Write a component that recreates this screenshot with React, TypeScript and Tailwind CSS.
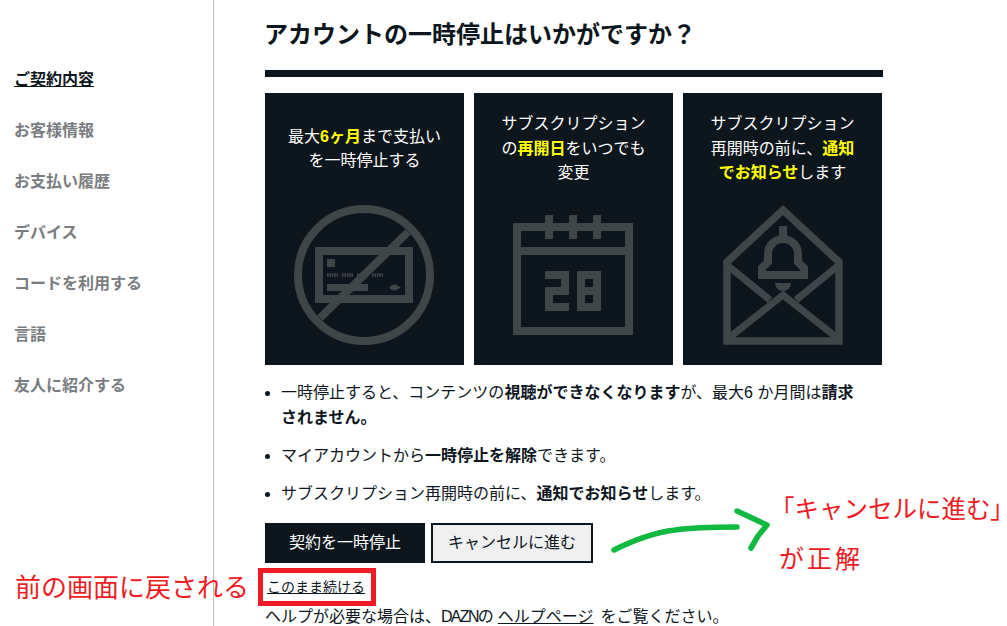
const font = { fontFamily: '"Liberation Sans", "Noto Sans CJK JP", sans-serif' };

const menu = ["ご契約内容", "お客様情報", "お支払い履歴", "デバイス", "コードを利用する", "言語", "友人に紹介する"];

function CardIcon() {
  return (
    <svg width="199" height="162" viewBox="0 0 199 162" fill="none" stroke="#3e4648" strokeWidth="8">
      <circle cx="99" cy="72" r="66" />
      <rect x="54" y="48" width="90" height="48" />
      <path d="M55 115 L143 29" />
      <rect x="62" y="56" width="8" height="8" fill="#3e4648" stroke="none" />
      <path d="M62 72 H73 M77 72 H88 M92 72 H103 M107 72 H118" strokeWidth="3.5" strokeDasharray="1.6 0.8" />
      <rect x="62" y="81" width="41" height="7" fill="#3e4648" stroke="none" />
      <path d="M124 84.5 L128 81 V88 Z M130 81 L136 84.5 L130 88 L127 84.5 Z" fill="#3e4648" stroke="none" />
    </svg>
  );
}

function CalendarIcon() {
  return (
    <svg width="199" height="162" viewBox="0 0 199 162" fill="none" stroke="#3e4648" strokeWidth="8">
      <rect x="43" y="24" width="112" height="104" />
      <path d="M43 48 H155" />
      <path d="M75 12 V36 M99 12 V36 M123 12 V36" />
      <path d="M71 72 H91 V88 H75 V104 H95" />
      <rect x="107" y="72" width="16" height="32" />
      <path d="M107 88 H123" />
    </svg>
  );
}

function EnvelopeIcon() {
  return (
    <svg width="199" height="162" viewBox="0 0 199 162" fill="none" stroke="#3e4648" strokeWidth="8">
      <path d="M44 138 V59 L100 7 L156 59 V138 Z" strokeWidth="7.5" />
      <path d="M44 62 L87 97 M156 62 L113 97" strokeWidth="7" />
      <path d="M47 134 L100 92 L153 134" strokeWidth="7" />
      <path d="M100 23 V34" />
      <path d="M79 72 H121 V65 L115 59 V51 A15 15 0 0 0 85 51 V59 L79 65 Z" />
      <path d="M92 80 H108 A8 8 0 0 1 92 80 Z" fill="#3e4648" stroke="none" />
    </svg>
  );
}

function Hl({ children }: { children: React.ReactNode }) {
  return <b className="font-bold text-[#ffff00]">{children}</b>;
}

export default function App() {
  return (
    <div className="relative flex h-[626px] w-[1007px] overflow-hidden bg-white text-[#0d161d]" style={font}>
      <nav className="h-full w-[214px] shrink-0 border-r border-[#bdbdbd] pl-[14px] pt-[55px]">
        <ul className="flex flex-col gap-[1px]">
          {menu.map((item, i) => (
            <li key={item} className={`h-[50px] text-base leading-[50px] font-bold ${i === 0 ? "underline text-[#0d161d]" : "text-[#7a7d80]"}`}>
              {item}
            </li>
          ))}
        </ul>
      </nav>

      <main className="ml-[51px] w-[618px]">
        <h1 className="mt-[18px] -ml-[1px] text-2xl leading-[34px] font-bold">アカウントの一時停止はいかがですか？</h1>
        <div className="mt-[18px] h-[7px] bg-[#0d161d]" />

        <div className="mt-[16px] flex gap-[10px]">
          <div className="h-[272px] w-[199px] bg-[#0d161d] text-white">
            <div className="flex h-[110px] items-center justify-center pt-[2px] text-center text-base leading-[24.5px]">
              <p>最大<Hl>6ヶ月</Hl>まで支払い<br />を一時停止する</p>
            </div>
            <CardIcon />
          </div>
          <div className="h-[272px] w-[199px] bg-[#0d161d] text-white">
            <div className="flex h-[110px] items-center justify-center pt-[2px] text-center text-base leading-[24.5px]">
              <p>サブスクリプション<br />の<Hl>再開日</Hl>をいつでも<br />変更</p>
            </div>
            <CalendarIcon />
          </div>
          <div className="h-[272px] w-[199px] bg-[#0d161d] text-white">
            <div className="flex h-[110px] items-center justify-center pt-[2px] text-center text-base leading-[24.5px]">
              <p>サブスクリプション<br />再開時の前に、<Hl>通知</Hl><br /><Hl>でお知らせ</Hl>します</p>
            </div>
            <EnvelopeIcon />
          </div>
        </div>

        <ul className="mt-[15px] list-disc pl-[16px] text-base leading-[25px]">
          <li>一時停止すると、コンテンツの<b>視聴ができなくなります</b>が、最大6 か月間は<b>請求</b><br /><b>されません。</b></li>
          <li className="mt-[13px]">マイアカウントから<b>一時停止を解除</b>できます。</li>
          <li className="mt-[13px]">サブスクリプション再開時の前に、<b>通知でお知らせ</b>します。</li>
        </ul>

        <div className="mt-[17px] flex gap-[6px]">
          <button className="h-[40px] w-[160px] bg-[#0d161d] text-base text-white">契約を一時停止</button>
          <button className="h-[40px] w-[162px] border-2 border-[#0d161d] bg-[#f0f0f0] text-base">キャンセルに進む</button>
        </div>

        <a className="mt-[14px] ml-[2px] block text-sm leading-[20px] underline">このまま続ける</a>
        <p className="mt-[8px] text-base leading-[24px]">
          ヘルプが必要な場合は、<span className="tracking-[-1.7px]">DAZN</span>の<span className="mr-[7px] ml-[4px] underline">ヘルプページ</span>をご覧ください。
        </p>
      </main>

      {/* annotations pasted over the screenshot */}
      <div className="absolute left-[258px] top-[568px] h-[38px] w-[118px] border-[5px] border-[#ed1c24]" />
      <div className="absolute left-[15px] top-[570px] text-[26px] leading-[36px] text-[#ed1c24]">前の画面に戻される</div>
      <div className="absolute left-[770px] top-[492px] text-[24.5px] leading-[36px] whitespace-nowrap text-[#ed1c24]">
        「キャンセルに進む<span className="[font-feature-settings:'palt']">」</span>
      </div>
      <div className="absolute left-[779px] top-[541px] text-[25px] leading-[36px] tracking-[3px] text-[#ed1c24]">が正解</div>
      <svg className="absolute left-[600px] top-[500px]" width="180" height="60" viewBox="600 500 180 60" fill="none" stroke="#10b93f" strokeWidth="5.5" strokeLinecap="round" strokeLinejoin="round">
        <path d="M614 550 C630 542 650 533 675 530 C695 527 715 527 737 527" />
        <path d="M737 511 L767 525 L758 536 L751 548" />
      </svg>
    </div>
  );
}
